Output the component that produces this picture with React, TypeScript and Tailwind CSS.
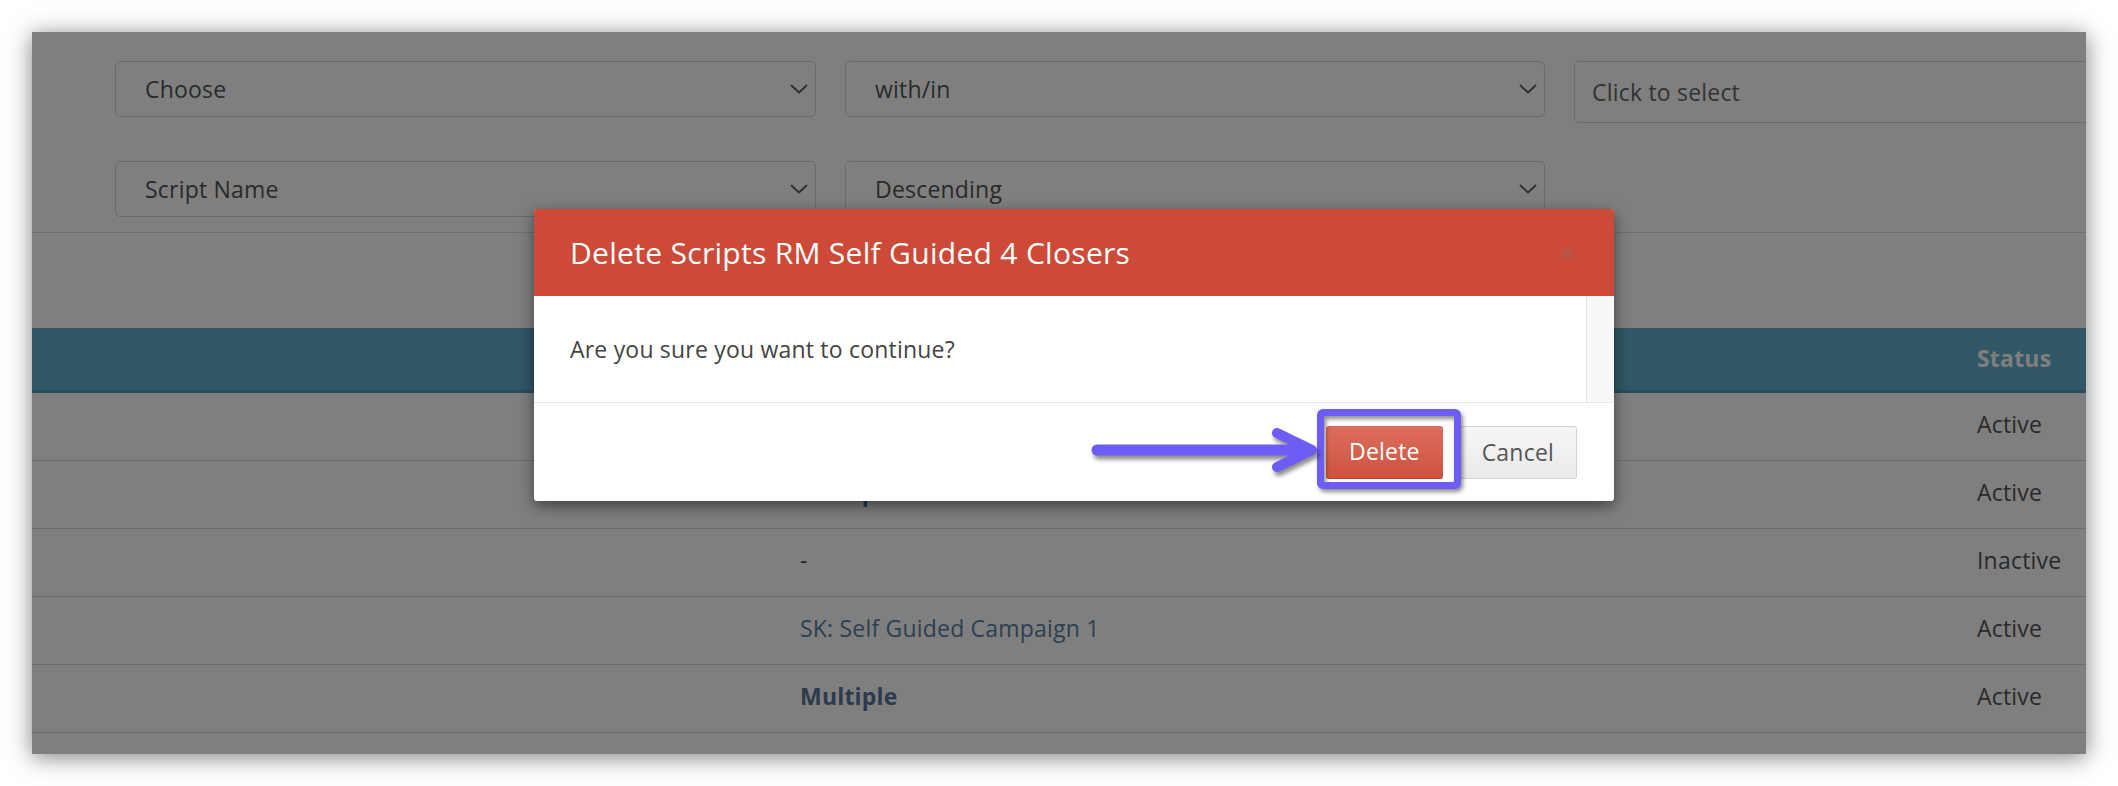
import React from 'react';

const Chevron = () => (
  <svg width="18" height="10" viewBox="0 0 18 10" fill="none" className="shrink-0">
    <path d="M1.5 1.5L9 8.5l7.5-7" stroke="#5a5a5a" strokeWidth="1.8" strokeLinecap="round" strokeLinejoin="round" />
  </svg>
);

const Select: React.FC<{ label: string; className: string }> = ({ label, className }) => (
  <div
    className={`flex shrink-0 items-center justify-between h-[56px] rounded-[5px] border border-[#d6d6d6] bg-white pl-[29px] pr-[7px] text-[23px] text-[#555] ${className}`}
  >
    <span>{label}</span>
    <Chevron />
  </div>
);

const rows = [
  { name: 'SK: Self Guided Campaign 2', bold: false, status: 'Active' },
  { name: 'Multiple', bold: true, status: 'Active' },
  { name: '-', bold: false, status: 'Inactive', plain: true },
  { name: 'SK: Self Guided Campaign 1', bold: false, status: 'Active' },
  { name: 'Multiple', bold: true, status: 'Active' },
];

export default function App() {
  return (
    <div
      className="w-[2118px] h-[786px] bg-white overflow-hidden pt-[32px] pl-[32px] tracking-[0.2px]"
      style={{ fontFamily: '"Open Sans", "Noto Sans", sans-serif' }}
    >
      <div className="relative w-[2054px] h-[722px] bg-white overflow-hidden shadow-[0_3px_22px_rgba(0,0,0,0.5)]">
        {/* Page */}
        <div className="pt-[29px] pl-[83px] pb-[15px] border-b border-[#dedede]">
          <div className="flex items-start gap-[29px]">
            <Select label="Choose" className="w-[701px]" />
            <Select label="with/in" className="w-[700px]" />
            <div className="flex items-center w-[600px] h-[62px] shrink-0 rounded-[5px] border border-[#d6d6d6] bg-white pl-[17px] text-[23px] text-[#666]">
              Click to select
            </div>
          </div>
          <div className="flex items-start gap-[29px] mt-[38px]">
            <Select label="Script Name" className="w-[701px]" />
            <Select label="Descending" className="w-[700px]" />
          </div>
        </div>

        <div className="mt-[95px] text-[23px]">
          <div className="grid grid-cols-[768px_1177px_1fr] items-center h-[65px] pb-[2px] bg-[#65aecc] border-b-[3px] border-[#5b9bb8] text-white font-bold">
            <div />
            <div />
            <div>Status</div>
          </div>
          {rows.map((r, i) => (
            <div
              key={i}
              className="grid grid-cols-[768px_1177px_1fr] items-center h-[68px] pb-[5px] border-b border-[#dadada]"
            >
              <div />
              <div
                className={
                  r.plain
                    ? 'text-[#444]'
                    : r.bold
                    ? 'text-[#57779a] font-bold'
                    : 'text-[#5a7fa2]'
                }
              >
                {r.name}
              </div>
              <div className="text-[#555]">{r.status}</div>
            </div>
          ))}
        </div>

        {/* Backdrop */}
        <div className="absolute inset-0 bg-black/50" />

        {/* Modal */}
        <div className="absolute left-[502px] top-[177px] w-[1080px] h-[292px] bg-white rounded-[3px] shadow-[0_5px_15px_rgba(0,0,0,0.5)]">
          <div className="flex items-center justify-between h-[87px] pl-[36px] pr-[38px] bg-[#cc4a37] rounded-t-[3px]">
            <span className="text-[30px] tracking-[0.3px] text-white leading-none">Delete Scripts RM Self Guided 4 Closers</span>
            <span className="text-[30px] font-bold leading-none text-[#b5564a]">×</span>
          </div>
          <div className="flex h-[106px]">
            <div className="flex-1 flex items-center pl-[36px] text-[23px] text-[#444]">
              Are you sure you want to continue?
            </div>
            <div className="w-[28px] bg-[#f8f8f8] border-l border-[#e6e6e6]" />
          </div>
          <div className="flex items-center justify-end h-[99px] pr-[37px] border-t border-[#e5e5e5]">
            <button className="h-[53px] px-[23px] rounded-[3px] text-[23px] text-white bg-gradient-to-b from-[#db6e5e] to-[#cf523f] border-b border-[#b8402e]">
              Delete
            </button>
            <button className="ml-[16px] h-[53px] px-[22px] rounded-[3px] text-[23px] text-[#555] bg-gradient-to-b from-[#f6f6f6] to-[#e9e9e9] border border-[#d4d4d4]">
              Cancel
            </button>
          </div>

          {/* Annotation: highlight box */}
          <div className="absolute left-[783px] top-[200px] w-[144px] h-[80px] border-[7px] border-[#6d5df5] rounded-[6px] drop-shadow-[2px_3px_2px_rgba(0,0,0,0.45)]" />

          {/* Annotation: arrow */}
          <svg
            className="absolute left-[550px] top-[213px] drop-shadow-[2px_4px_2px_rgba(0,0,0,0.45)]"
            width="240"
            height="60"
            viewBox="0 0 240 60"
            fill="none"
          >
            <path d="M13 28H222" stroke="#6d5df5" strokeWidth="11" strokeLinecap="round" />
            <path d="M193 11L228 28L193 45" stroke="#6d5df5" strokeWidth="10" strokeLinecap="round" strokeLinejoin="round" />
          </svg>
        </div>
      </div>
    </div>
  );
}
